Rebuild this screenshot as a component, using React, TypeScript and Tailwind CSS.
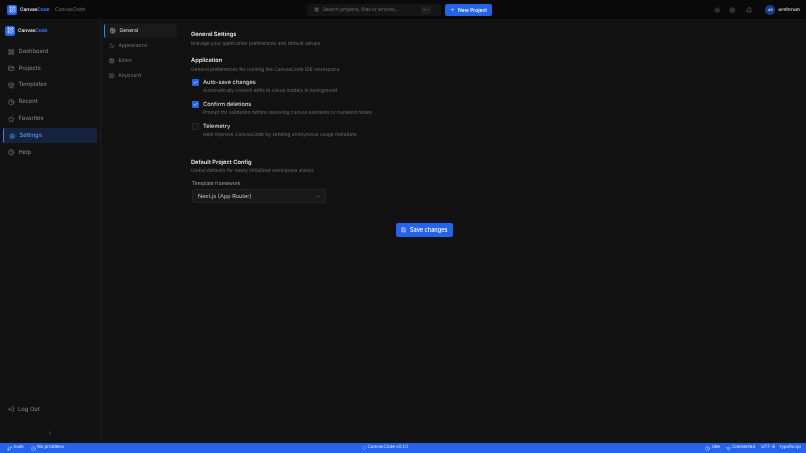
import {
  LayoutDashboard,
  FolderOpen,
  Box,
  Clock,
  Star,
  Settings,
  CircleHelp,
  LogOut,
  ChevronLeft,
  ChevronDown,
  Command,
  Plus,
  Sun,
  Bell,
  GitBranch,
  CircleCheck,
  Diamond,
  Wifi,
  Moon,
  Cpu,
  Keyboard,
  Save,
  Check,
  Grid2x2,
  QrCode,
} from 'lucide-react'

const navItems = [
  { label: 'Dashboard', icon: LayoutDashboard },
  { label: 'Projects', icon: FolderOpen },
  { label: 'Templates', icon: Box },
  { label: 'Recent', icon: Clock },
  { label: 'Favorites', icon: Star },
  { label: 'Settings', icon: Settings, active: true },
  { label: 'Help', icon: CircleHelp },
]

const settingsTabs = [
  { label: 'General', icon: Grid2x2, active: true },
  { label: 'Appearance', icon: Moon },
  { label: 'Editor', icon: Cpu },
  { label: 'Keyboard', icon: Keyboard },
]

const toggles = [
  { title: 'Auto-save changes', desc: 'Automatically commit edits to visual models in background', on: true },
  { title: 'Confirm deletions', desc: 'Prompt for validation before removing canvas elements or backend nodes', on: true },
  { title: 'Telemetry', desc: 'Help improve CanvasCode by sending anonymous usage metadata', on: false },
]

const Logo = ({ className }: { className: string }) => (
  <div className={`flex items-center justify-center rounded-[2px] bg-[#2563eb] text-white ${className}`}>
    <QrCode className="size-[70%]" strokeWidth={2} />
  </div>
)

const Brand = () => (
  <span className="text-[4.8px] font-semibold leading-[8px] text-[#e5e5e5]">
    Canvas<span className="text-[#3b82f6]">Code</span>
  </span>
)

export default function App() {
  return (
    <div className="flex h-[453px] w-[806px] flex-col overflow-hidden bg-[#121212] font-['Inter',sans-serif] text-[6px] leading-[8px] text-[#a3a3a3] will-change-transform [text-rendering:geometricPrecision]">
      <header className="flex h-[19px] shrink-0 items-center bg-[#0a0a0a] pl-[7px] pr-[6px] pt-[0.6px]">
        <div className="flex w-[300px] items-center">
          <Logo className="size-[10px]" />
          <div className="ml-[3px] flex w-[35px] items-center">
            <Brand />
          </div>
          <span className="text-[5px] text-[#737373]">CanvasCode</span>
        </div>
        <div className="flex h-[12px] w-[134px] items-center rounded-[2px] bg-[#151515] pl-[7px] pr-[10px]">
          <Command className="size-[5px] text-[#8a8a8a]" />
          <span className="ml-[4px] flex-1 text-[4.8px] text-[#737373]">Search projects, files or actions...</span>
          <span className="rounded-[1px] bg-[#1f1f1f] px-[1.5px] text-[3.5px] text-[#525252]">⌘ K</span>
        </div>
        <button className="ml-[4px] flex h-[12px] w-[47px] items-center justify-center gap-[3px] rounded-[2px] bg-[#2563eb] text-[5px] font-medium text-white">
          <Plus className="size-[5px]" />
          New Project
        </button>
        <div className="ml-auto flex items-center text-[#737373]">
          <Sun className="size-[6.5px]" />
          <Settings className="ml-[9px] size-[6.5px]" />
          <Bell className="ml-[10px] size-[6.5px]" />
          <div className="ml-[13px] flex size-[10px] items-center justify-center rounded-full bg-[#1e3a8a] text-[3.5px] font-semibold text-[#bfdbfe]">
            AR
          </div>
          <span className="ml-[3px] text-[5.2px] font-medium text-[#d4d4d4]">arehman</span>
        </div>
      </header>

      <div className="flex min-h-0 flex-1">
        <aside className="flex w-[101px] shrink-0 flex-col border-r border-[#1c1c1c] px-[3px] pb-[7px]">
          <div className="flex h-[23px] items-center gap-[3px] pl-[2px]">
            <Logo className="size-[10px]" />
            <Brand />
          </div>
          <nav className="mt-[2.4px] flex flex-col gap-[1.8px]">
            {navItems.map(item => (
              <div
                key={item.label}
                className={`flex h-[15px] items-center gap-[4px] rounded-[2px] pl-[5px] text-[5.8px] ${
                  item.active
                    ? 'border-l border-[#3b82f6] bg-[#16233f] pl-[4px] text-[#60a5fa]'
                    : 'text-[#8a8a8a]'
                }`}
              >
                <item.icon className="size-[6.5px]" />
                {item.label}
              </div>
            ))}
          </nav>
          <div className="mt-auto flex h-[15px] items-center gap-[3.5px] pl-[5px] text-[5.8px] text-[#8a8a8a]">
            <LogOut className="size-[6.5px] rotate-180" />
            Log Out
          </div>
          <div className="mt-[13px] flex justify-center text-[#737373]">
            <ChevronLeft className="size-[6px]" />
          </div>
        </aside>

        <div className="flex w-[82px] shrink-0 flex-col gap-[1px] pl-[3px] pt-[5px]">
          {settingsTabs.map(tab => (
            <div
              key={tab.label}
              className={`flex h-[14px] w-[73px] items-center gap-[4px] rounded-[2px] pl-[5px] text-[5px] ${
                tab.active ? 'border-l border-[#3b82f6] bg-[#1a1a1a] pl-[4px] font-medium text-[#d4d4d4]' : 'text-[#737373]'
              }`}
            >
              <tab.icon className="size-[5.5px]" />
              {tab.label}
            </div>
          ))}
        </div>

        <main className="min-w-0 flex-1 pl-[8px] pt-[12px]">
          <h1 className="text-[5.7px] font-semibold leading-[7px] text-[#e5e5e5]">General Settings</h1>
          <p className="mt-[3px] text-[4.85px] leading-[6px] text-[#6b6b6b]">Manage your application preferences and default setups</p>

          <h2 className="mt-[10px] text-[5.7px] font-semibold leading-[7px] text-[#e5e5e5]">Application</h2>
          <p className="mt-[3px] text-[4.85px] leading-[6px] text-[#6b6b6b]">General preferences for running the CanvasCode IDE workspace</p>

          <div className="mt-[6px] flex flex-col gap-[7px] pl-[1px]">
            {toggles.map(t => (
              <div key={t.title} className="flex h-[15px] items-start">
                <div
                  className={`flex size-[7px] items-center justify-center rounded-[1px] ${
                    t.on ? 'bg-[#2563eb] text-white' : 'border border-[#2a2a2a] bg-[#161616]'
                  }`}
                >
                  {t.on && <Check className="size-[5px]" strokeWidth={3} />}
                </div>
                <div className="ml-[4px]">
                  <div className="text-[5.7px] font-medium leading-[8px] text-[#d4d4d4]">{t.title}</div>
                  <div className="mt-[0.5px] text-[4.85px] leading-[7px] text-[#6b6b6b]">{t.desc}</div>
                </div>
              </div>
            ))}
          </div>

          <h2 className="mt-[21px] text-[5.7px] font-semibold leading-[7px] text-[#e5e5e5]">Default Project Config</h2>
          <p className="mt-[2px] text-[4.85px] leading-[6px] text-[#6b6b6b]">Global defaults for newly initialized workspace stacks</p>

          <label className="mt-[7px] block pl-[1px] text-[5px] leading-[6px] text-[#a3a3a3]">Template framework</label>
          <div className="ml-[1px] mt-[2px] flex h-[14px] w-[134px] items-center justify-between rounded-[2px] border border-[#222] bg-[#191919] pl-[5px] pr-[4px] pt-[1px] text-[5.6px] text-[#c4c4c4]">
            Next.js (App Router)
            <ChevronDown className="size-[5px] text-[#8a8a8a]" />
          </div>

          <div className="mt-[20px] flex w-[465px] justify-center">
            <button className="ml-[1px] flex h-[14px] w-[57px] items-center justify-center gap-[4px] rounded-[2px] bg-[#2563eb] text-[5.6px] font-medium text-white">
              <Save className="size-[5.5px]" />
              Save changes
            </button>
          </div>
        </main>
      </div>

      <footer className="flex h-[10px] shrink-0 items-center justify-between bg-[#2563eb] pl-[7px] pr-[5px] pt-[0.6px] text-[4.5px] text-[#dbeafe]">
        <div className="flex items-center">
          <GitBranch className="size-[5px]" />
          <span className="ml-[1.5px]">main</span>
          <CircleCheck className="ml-[7px] size-[5px]" />
          <span className="ml-[1.5px]">No problems</span>
        </div>
        <div className="flex items-center gap-[2px]">
          <Diamond className="size-[4px]" />
          CanvasCode v0.1.0
        </div>
        <div className="flex items-center">
          <Clock className="size-[5px]" />
          <span className="ml-[2px]">Idle</span>
          <Wifi className="ml-[6px] size-[5px]" />
          <span className="ml-[1px]">Connected</span>
          <span className="ml-[6px]">UTF-8</span>
          <span className="ml-[4px] text-[4.3px]">TypeScript</span>
        </div>
      </footer>
    </div>
  )
}
